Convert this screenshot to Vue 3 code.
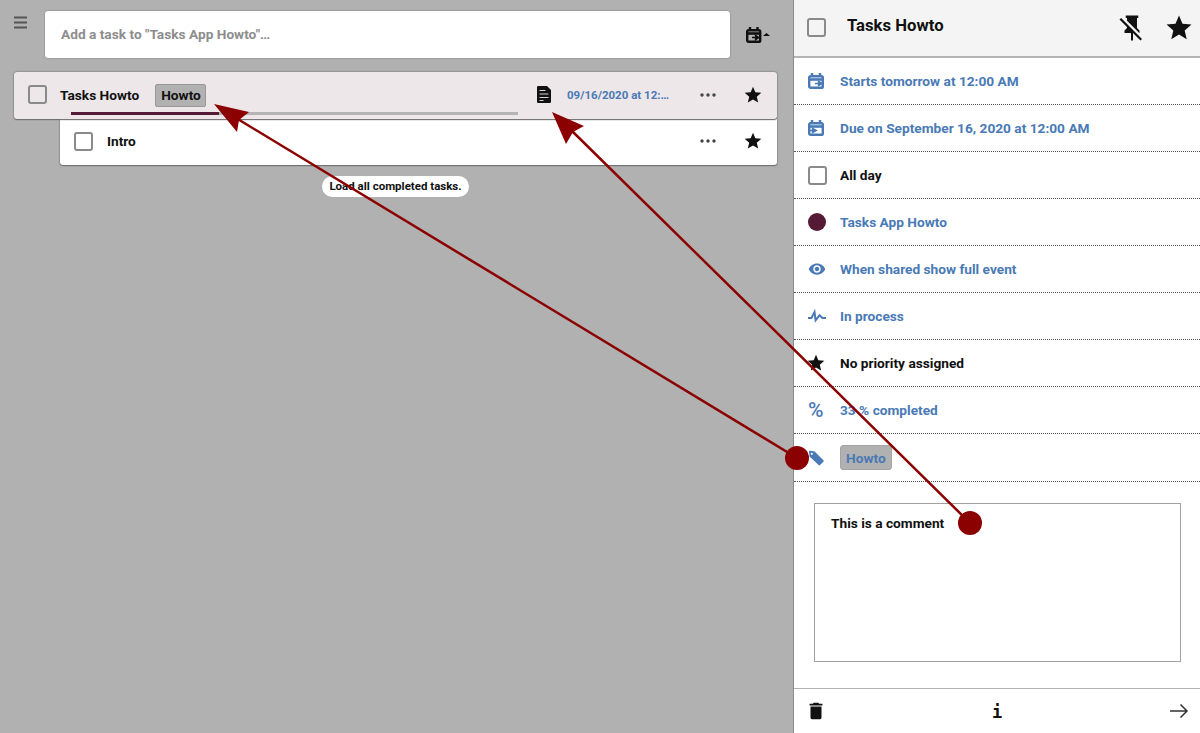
<template>
  <div class="app">
    <main class="list-pane">
      <div class="top-row">
        <svg class="menu-icon" viewBox="0 0 14 14" width="14" height="14"><path d="M0 1.500h13M0 6.500h13M0 11.500h13" stroke="#555" stroke-width="2" fill="none" /></svg>
        <div class="add-input">Add a task to "Tasks App Howto"…</div>
        <svg class="due-icon" viewBox="0 0 24 16" width="24" height="16">
          <path d="M4 0v4M11.500 0v4" stroke="#111" stroke-width="2.400" fill="none" />
          <rect x="1.200" y="3.200" width="13" height="11.600" rx="1.400" fill="none" stroke="#111" stroke-width="2.400" />
          <path d="M1 6.500h14" stroke="#111" stroke-width="2.600" />
          <path d="M6 10.500h5M9.500 8.300l3.500 2.200-3.500 2.200z" stroke="#111" stroke-width="1.300" fill="#111" />
          <path d="M17 9l3.500-3 3.500 3z" fill="#111" />
        </svg>
      </div>

      <div class="task-row task-row--main">
        <span class="check"></span>
        <span class="task-title">Tasks Howto</span>
        <span class="tag tag--list">Howto</span>
        <span class="spacer"></span>
        <svg class="note-icon" viewBox="0 0 14 17" width="14" height="17">
          <path d="M1.200 0h8.800l4 4v11.800a1.200 1.200 0 0 1-1.200 1.200H1.200A1.200 1.200 0 0 1 0 15.800V1.200A1.200 1.200 0 0 1 1.200 0z" fill="#111" />
          <path d="M2.500 4.500h6M2.500 8h9M2.500 11.500h9M2.500 14.500h4" stroke="#d8d4d6" stroke-width="1.100" />
        </svg>
        <span class="task-date">09/16/2020 at 12:…</span>
        <svg class="dots" viewBox="0 0 16 4" width="16" height="4"><circle v-for="x in [2, 8, 14]" :key="x" :cx="x" cy="2" r="1.700" fill="#444" /></svg>
        <svg class="star" viewBox="0 0 24 24" width="20" height="20"><path :d="starPath" fill="#111" /></svg>
        <div class="progress"><div class="progress-fill" :style="{ width: '33%' }"></div></div>
      </div>

      <div class="task-row task-row--sub">
        <span class="check"></span>
        <span class="task-title">Intro</span>
        <span class="spacer"></span>
        <svg class="dots" viewBox="0 0 16 4" width="16" height="4"><circle v-for="x in [2, 8, 14]" :key="x" :cx="x" cy="2" r="1.700" fill="#444" /></svg>
        <svg class="star" viewBox="0 0 24 24" width="20" height="20"><path :d="starPath" fill="#111" /></svg>
      </div>

      <div class="load-wrap"><span class="load-btn">Load all completed tasks.</span></div>
    </main>

    <aside class="details">
      <header class="details-head">
        <span class="check check--head"></span>
        <span class="details-title">Tasks Howto</span>
        <span class="spacer"></span>
        <svg class="head-icon pin" viewBox="0 0 24 24" width="30" height="30">
          <path d="M2 5.270L3.280 4 20 20.720 18.730 22 12.800 16.070V22H11.200V16H6V14L8 12V11.270L2 5.270M16 12L18 14V16H17.820L8 6.180V4H7V2H17V4H16V12Z" fill="#111" />
        </svg>
        <svg class="head-icon" viewBox="0 0 24 24" width="30" height="30"><path :d="starPath" fill="#111" /></svg>
      </header>

      <div v-for="row in rows" :key="row.text" class="detail-row" :class="{ 'detail-row--tag': row.icon === 'tag' }">
        <span class="row-icon">
          <svg v-if="row.icon === 'start'" viewBox="0 0 16 16" width="16" height="16">
            <path d="M4 0v4M12 0v4" stroke="#4a7ab5" stroke-width="2.400" fill="none" />
            <rect x="1.200" y="3.200" width="13.600" height="11.600" rx="1.400" fill="none" stroke="#4a7ab5" stroke-width="2.400" />
            <path d="M1 6.500h14" stroke="#4a7ab5" stroke-width="2.600" />
            <path d="M7 10.500h5M10.500 8.300l4 2.200-4 2.200z" stroke="#4a7ab5" stroke-width="1.300" fill="#4a7ab5" />
          </svg>
          <svg v-else-if="row.icon === 'due'" viewBox="0 0 16 16" width="16" height="16">
            <path d="M4 0v4M12 0v4" stroke="#4a7ab5" stroke-width="2.400" fill="none" />
            <rect x="1.200" y="3.200" width="13.600" height="11.600" rx="1.400" fill="none" stroke="#4a7ab5" stroke-width="2.400" />
            <path d="M1 6.500h14" stroke="#4a7ab5" stroke-width="2.600" />
            <path d="M1 10.500h5M4.500 8.300l4 2.200-4 2.200z" stroke="#4a7ab5" stroke-width="1.300" fill="#4a7ab5" />
          </svg>
          <span v-else-if="row.icon === 'check'" class="check"></span>
          <span v-else-if="row.icon === 'dot'" class="calendar-dot"></span>
          <svg v-else-if="row.icon === 'eye'" viewBox="0 0 24 24" width="18" height="18">
            <path d="M12 4.500C7 4.500 2.730 7.610 1 12c1.730 4.390 6 7.500 11 7.500s9.270-3.110 11-7.500c-1.730-4.390-6-7.500-11-7.500zM12 17c-2.760 0-5-2.240-5-5s2.240-5 5-5 5 2.240 5 5-2.240 5-5 5zm0-8c-1.660 0-3 1.340-3 3s1.340 3 3 3 3-1.340 3-3-1.340-3-3-3z" fill="#4a7ab5" />
          </svg>
          <svg v-else-if="row.icon === 'pulse'" class="pulse-icon" viewBox="0 0 24 24" width="24" height="24">
            <path d="M3 13H5.790L10.100 4.790 11.280 13.750 14.500 9.660 17.830 13H21V15H17L14.670 12.670 9.920 18.730 8.940 11.310 7 15H3V13Z" fill="#4a7ab5" />
          </svg>
          <svg v-else-if="row.icon === 'star'" class="row-star" viewBox="0 0 24 24" width="20" height="20"><path :d="starPath" fill="#111" /></svg>
          <span v-else-if="row.icon === 'percent'" class="percent">%</span>
          <svg v-else-if="row.icon === 'tag'" viewBox="0 0 16 16" width="16" height="16">
            <path d="M1.800 0.800L6 1.200a1 1 0 0 1 .6.300l8.800 8.800a1 1 0 0 1 0 1.400l-3.400 3.400a1 1 0 0 1-1.400 0L1.800 6.800a1 1 0 0 1-.3-.6L1 1.600a.7.7 0 0 1 .8-.8z" fill="#4a7ab5" />
            <circle cx="3.800" cy="3.800" r="1.100" fill="#fff" />
          </svg>
        </span>
        <span v-if="row.icon === 'tag'" class="tag tag--blue">{{ row.text }}</span>
        <span v-else :class="['row-text', { 'row-text--dark': row.dark }]">{{ row.text }}</span>
      </div>

      <div class="comment-wrap">
        <div class="comment">This is a comment</div>
      </div>

      <footer class="details-foot">
        <svg viewBox="0 0 24 24" width="22" height="22">
          <path d="M19 4H15.500L14.500 3H9.500L8.500 4H5V6H19M6 19A2 2 0 0 0 8 21H16A2 2 0 0 0 18 19V7H6V19Z" fill="#111" />
        </svg>
        <span class="info">i</span>
        <svg viewBox="0 0 20 16" width="20" height="16">
          <path d="M1 8h17M11.500 1.500L18 8l-6.500 6.500" stroke="#333" stroke-width="1.500" fill="none" />
        </svg>
      </footer>
    </aside>

    <svg class="arrows" viewBox="0 0 1200 733" width="1200" height="733">
      <path d="M797 458L236 118M970 523L570 129" stroke="#8b0000" stroke-width="2.500" fill="none" />
      <path d="M214 104L249 112L239 120L237 132z" fill="#8b0000" />
      <path d="M552 112L584 126L573 132L566 144z" fill="#8b0000" />
      <circle cx="797" cy="458" r="12" fill="#8b0000" />
      <circle cx="970" cy="523" r="12" fill="#8b0000" />
    </svg>
  </div>
</template>

<script setup>
const starPath = 'M12 17.270L18.180 21l-1.640-7.030L22 9.240l-7.190-.61L12 2 9.190 8.630 2 9.240l5.460 4.730L5.820 21z'

const rows = [
  { icon: 'start', text: 'Starts tomorrow at 12:00 AM' },
  { icon: 'due', text: 'Due on September 16, 2020 at 12:00 AM' },
  { icon: 'check', text: 'All day', dark: true },
  { icon: 'dot', text: 'Tasks App Howto' },
  { icon: 'eye', text: 'When shared show full event' },
  { icon: 'pulse', text: 'In process' },
  { icon: 'star', text: 'No priority assigned', dark: true },
  { icon: 'percent', text: '33 % completed' },
  { icon: 'tag', text: 'Howto' },
]
</script>

<style>
html, body {
  margin: 0;
  overflow: hidden;
}
</style>

<style scoped>
.app {
  position: relative;
  display: flex;
  width: 1200px;
  height: 733px;
  overflow: hidden;
  font-family: Roboto, "Liberation Sans", sans-serif;
  font-size: 13.700px;
  font-weight: 700;
  color: #111;
  background: #fff;
}

.list-pane {
  width: 793px;
  flex: none;
  background: #b1b1b1;
  padding: 11px 16px 0 14px;
  box-sizing: border-box;
}

.top-row {
  display: flex;
  align-items: flex-start;
  margin-bottom: 14px;
}

.menu-icon {
  margin-top: 5px;
  margin-right: 17px;
  flex: none;
}

.add-input {
  flex: 1;
  height: 47px;
  line-height: 47px;
  padding-left: 16px;
  box-sizing: border-box;
  background: #fff;
  border-radius: 3px;
  box-shadow: 0 0 2px #707070;
  color: #8d8d8d;
}

.due-icon {
  flex: none;
  margin: 16px 7px 0 16px;
}

.task-row {
  position: relative;
  display: flex;
  align-items: center;
  box-sizing: border-box;
  height: 47px;
  background: #fff;
  box-shadow: 0 0 2px #555, 0 1px 1px #777;
}

.task-row--main {
  background: #ede7e9;
  border-radius: 3px;
  padding: 0 14px 2px;
  z-index: 1;
}

.task-row--sub {
  margin-left: 46px;
  height: 46px;
  border-radius: 0 0 3px 3px;
  padding: 0 14px 2px;
}

.task-row--sub .task-title {
  margin-left: 14px;
}

.check {
  display: block;
  flex: none;
  width: 15px;
  height: 15px;
  border: 2px solid #8a8a8a;
  border-radius: 3px;
  background: #fff;
}

.task-row--main .check,
.details-head .check {
  background: transparent;
}

.task-title {
  margin-left: 13px;
}

.tag {
  margin-left: 15px;
  padding: 3px 4px 3px 5px;
  background: #b1b1b1;
  border: 1px solid #989898;
  border-radius: 2px;
  line-height: 15px;
}

.tag--list {
  margin-left: 16px;
  margin-top: 1px;
}

.spacer {
  flex: 1;
}

.note-icon {
  margin-right: 16px;
}

.task-date {
  width: 105px;
  margin-right: 28px;
  color: #4a7ab5;
  font-size: 11.500px;
  white-space: nowrap;
}

.dots {
  margin-right: 27px;
}

.progress {
  position: absolute;
  left: 57px;
  bottom: 4px;
  width: 447px;
  height: 3px;
  background: #b4b4b4;
}

.progress-fill {
  height: 100%;
  background: #541a36;
}

.load-wrap {
  display: flex;
  justify-content: center;
  margin-top: 11px;
}

.load-btn {
  display: block;
  background: #fff;
  border-radius: 11px;
  padding: 0 7px;
  line-height: 21px;
  font-size: 11.500px;
}

.details {
  flex: 1;
  min-width: 0;
  display: flex;
  flex-direction: column;
  border-left: 1px solid #8a8a8a;
}

.details-head {
  display: flex;
  align-items: center;
  height: 58px;
  box-sizing: border-box;
  padding: 0 6px 4px 13px;
  background: #f4f4f4;
  border-bottom: 2px solid #b4b4b4;
}

.check--head {
  margin-top: 2px;
}

.details-title {
  margin-left: 21px;
  margin-bottom: 2px;
  font-size: 16.700px;
}

.head-icon {
  margin-top: 4px;
}

.pin {
  margin-right: 17px;
}

.detail-row {
  display: flex;
  align-items: center;
  flex: none;
  height: 47px;
  box-sizing: border-box;
  border-bottom: 1px dotted #555;
  padding-left: 14px;
}

.detail-row--tag {
  height: 48px;
}

.row-icon {
  display: flex;
  align-items: center;
  justify-content: flex-start;
  width: 18px;
  margin-right: 14px;
  flex: none;
}

.row-icon svg {
  flex: none;
}

.pulse-icon {
  margin-left: -3px;
}

.row-star {
  margin-left: -2px;
}

.row-text {
  color: #4a7ab5;
}

.row-text--dark {
  color: #111;
}

.calendar-dot {
  display: block;
  width: 18px;
  height: 18px;
  border-radius: 50%;
  background: #541a36;
}

.percent {
  font-size: 21px;
  font-weight: 500;
  color: #4a7ab5;
}

.tag--blue {
  margin-left: 0;
  padding: 5px 5px 3px;
  color: #4a7ab5;
  border-radius: 3px;
  border-color: #a4a4a4;
}

.comment-wrap {
  flex: 1;
  padding: 21px 19px 26px 20px;
  min-height: 0;
  border-bottom: 1px solid #b4b4b4;
}

.comment {
  height: 100%;
  box-sizing: border-box;
  border: 1px solid #a0a0a0;
  padding: 11px 16px;
}

.details-foot {
  display: flex;
  align-items: center;
  justify-content: space-between;
  flex: none;
  height: 44px;
  padding: 0 11px;
}

.info {
  margin-right: 2px;
  padding-top: 2px;
  font-family: "DejaVu Sans Mono", monospace;
  font-size: 17px;
  color: #111;
}

.arrows {
  position: absolute;
  left: 0;
  top: 0;
  pointer-events: none;
  z-index: 5;
}
</style>
